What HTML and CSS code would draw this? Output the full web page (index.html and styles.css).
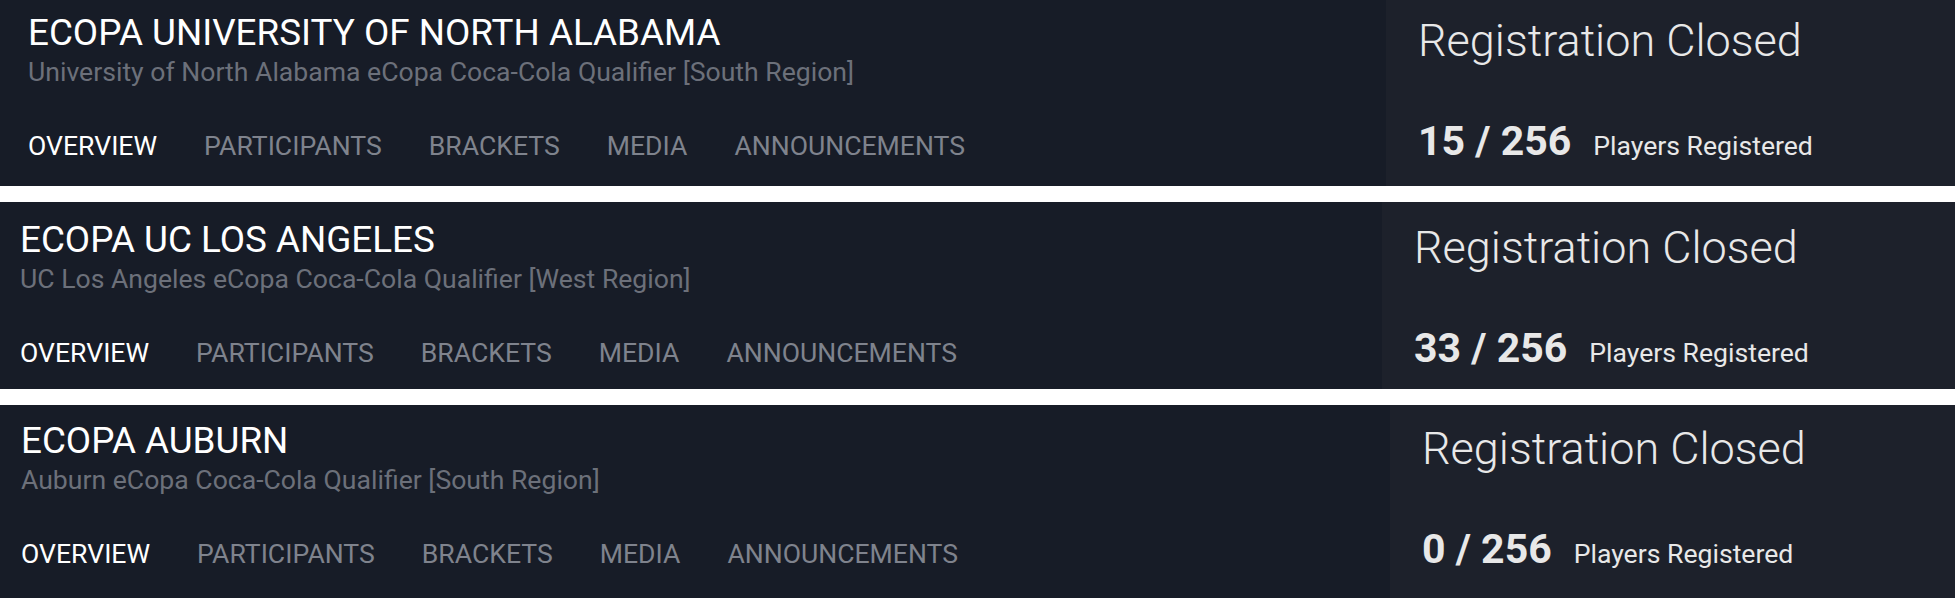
FILE: index.html
```html
<!DOCTYPE html>
<html lang="en">
<head>
  <meta charset="UTF-8">
  <meta name="viewport" content="width=device-width, initial-scale=1.0">
  <title>eCopa Qualifiers</title>
  <link rel="stylesheet" href="styles.css">
</head>
<body>
  <div class="events">
    <div class="event event--a">
      <div class="event-info">
        <h2 class="event-title">ECOPA UNIVERSITY OF NORTH ALABAMA</h2>
        <p class="event-sub">University of North Alabama eCopa Coca-Cola Qualifier [South Region]</p>
        <nav class="event-nav">
          <a href="#" class="active">OVERVIEW</a>
          <a href="#">PARTICIPANTS</a>
          <a href="#">BRACKETS</a>
          <a href="#">MEDIA</a>
          <a href="#">ANNOUNCEMENTS</a>
        </nav>
      </div>
      <div class="event-status">
        <div class="status-label">Registration Closed</div>
        <div class="status-count"><strong>15 / 256</strong><span>Players Registered</span></div>
      </div>
    </div>

    <div class="event event--b">
      <div class="event-info">
        <h2 class="event-title">ECOPA UC LOS ANGELES</h2>
        <p class="event-sub">UC Los Angeles eCopa Coca-Cola Qualifier [West Region]</p>
        <nav class="event-nav">
          <a href="#" class="active">OVERVIEW</a>
          <a href="#">PARTICIPANTS</a>
          <a href="#">BRACKETS</a>
          <a href="#">MEDIA</a>
          <a href="#">ANNOUNCEMENTS</a>
        </nav>
      </div>
      <div class="event-status">
        <div class="status-label">Registration Closed</div>
        <div class="status-count"><strong>33 / 256</strong><span>Players Registered</span></div>
      </div>
    </div>

    <div class="event event--c">
      <div class="event-info">
        <h2 class="event-title">ECOPA AUBURN</h2>
        <p class="event-sub">Auburn eCopa Coca-Cola Qualifier [South Region]</p>
        <nav class="event-nav">
          <a href="#" class="active">OVERVIEW</a>
          <a href="#">PARTICIPANTS</a>
          <a href="#">BRACKETS</a>
          <a href="#">MEDIA</a>
          <a href="#">ANNOUNCEMENTS</a>
        </nav>
      </div>
      <div class="event-status">
        <div class="status-label">Registration Closed</div>
        <div class="status-count"><strong>0 / 256</strong><span>Players Registered</span></div>
      </div>
    </div>
  </div>
</body>
</html>
```

FILE: styles.css
```css
body {
  font-family: Roboto, "Liberation Sans", sans-serif;
  margin: 0;
  padding: 0;
  background-color: #fff;
  overflow: hidden;
}

.events {
  display: flex;
  flex-direction: column;
  gap: 16px;
}

.event {
  display: flex;
  height: 187px;
  background-color: #171c27;
}

.event-info {
  flex: 1;
  padding: 20px 0 0 22px;
}

.event-title {
  margin: 0;
  font-size: 36.8px;
  font-weight: 400;
  line-height: 1;
  color: #fff;
}

.event-sub {
  margin: 7px 0 0;
  font-size: 26.6px;
  line-height: 1;
  color: #6c707a;
}

.event-nav {
  display: flex;
  margin-top: 48px;
}

.event-nav a {
  margin-right: 47px;
  font-size: 26.6px;
  line-height: 1;
  color: #7f838d;
  text-decoration: none;
}

.event-nav a.active {
  color: #fff;
}

.event-status {
  width: 569px;
  padding: 23px 0 0 32px;
  box-sizing: border-box;
  background-color: #1d212b;
  color: #e8e8e8;
}

.status-label {
  font-size: 45px;
  font-weight: 300;
  line-height: 1;
}

.status-count {
  display: flex;
  align-items: baseline;
  margin-top: 58px;
}

.status-count strong {
  font-size: 41px;
  font-weight: 700;
  line-height: 1;
}

.status-count span {
  margin-left: 22px;
  font-size: 26.6px;
  line-height: 1;
}

.event--a {
  margin-top: -5px;
  height: 191px;
}

.event--a .event-info {
  padding-left: 28px;
}

.event--b .event-info {
  padding-left: 20px;
}

.event--b .event-status {
  width: 573px;
}

.event--c {
  height: 200px;
}

.event--c .event-info {
  padding-top: 18px;
  padding-left: 21px;
}

.event--c .event-status {
  width: 565px;
  padding-top: 21px;
}
```
